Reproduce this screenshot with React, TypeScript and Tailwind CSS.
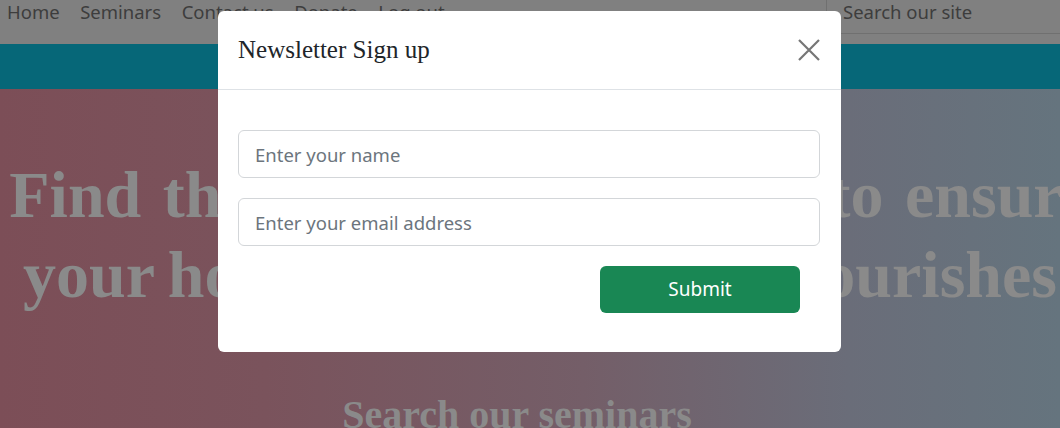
import * as React from 'react';

const navLinks = ['Home', 'Seminars', 'Contact us', 'Donate', 'Log out'];

const CloseIcon = () => (
    <svg width="22" height="22" viewBox="0 0 22 22" fill="none">
        <path d="M1 1L21 21M21 1L1 21" stroke="#767676" strokeWidth="2.2" strokeLinecap="butt" />
    </svg>
);

const Input = ({placeholder}: {placeholder: string}) => (
    <input
        type="text"
        placeholder={placeholder}
        className="h-[48px] w-full rounded-[6px] border border-[#d3d6d9] bg-white px-4 text-[18.5px] text-[#212529] placeholder:text-[#6c757d] focus:outline-none"
    />
);

const App = () => {
    return (
        <div className="relative h-[428px] w-full overflow-hidden font-['Noto_Sans',sans-serif]">
            <div className="flex h-[44px] items-start bg-[#808080]">
                <div className="flex gap-[20.5px] pl-[7px] text-[18.5px] leading-[24px] text-[#3d3d3d]">
                    {navLinks.map((link) => (
                        <span key={link}>{link}</span>
                    ))}
                </div>
                <div className="ml-auto h-[34px] w-[234px] border-b border-l border-[#707070] pl-[16px] text-[18.5px] leading-[24px] text-[#3d3d3d]">
                    Search our site
                </div>
            </div>
            <div className="h-[45px] bg-[#066778]" />
            <div className="flex h-[339px] flex-col items-center bg-[linear-gradient(to_right,#7c4e57_0%,#7a535c_25%,#745e68_55%,#6a6d79_80%,#65747e_100%)] pl-[20px] font-['Liberation_Serif',serif] font-bold text-[#8a8a8a]">
                <h1 className="mt-[66px] whitespace-nowrap text-center text-[66px] leading-[80px]">
                    <span className="block pl-[20px] [word-spacing:5px]">Find the marriage seminars to ensure</span>
                    <span className="block [word-spacing:-2.5px]">your household and family flourishes</span>
                </h1>
                <h2 className="mr-[46px] mt-[76px] whitespace-nowrap text-[40px] leading-[48px]">
                    Search our seminars
                </h2>
            </div>

            <div className="absolute inset-0 pt-[11px]">
                <div className="ml-[218px] h-[341px] w-[623px] rounded-[6px] bg-white">
                    <div className="flex h-[79px] items-center justify-between border-b border-[#dee2e6] pl-[20px] pr-[20px]">
                        <h3 className="font-['Liberation_Serif',serif] text-[25px] leading-[30px] text-[#212529]">
                            Newsletter Sign up
                        </h3>
                        <button type="button" className="mr-[1px]">
                            <CloseIcon />
                        </button>
                    </div>
                    <div className="flex flex-col gap-[20px] pl-[20px] pr-[21px] pt-[40px]">
                        <Input placeholder="Enter your name" />
                        <Input placeholder="Enter your email address" />
                        <div className="flex justify-end pr-[20px]">
                            <button
                                type="button"
                                className="h-[47px] w-[200px] rounded-[6px] bg-[#198754] text-[19px] text-white"
                            >
                                Submit
                            </button>
                        </div>
                    </div>
                </div>
            </div>
        </div>
    );
};

export default App;
